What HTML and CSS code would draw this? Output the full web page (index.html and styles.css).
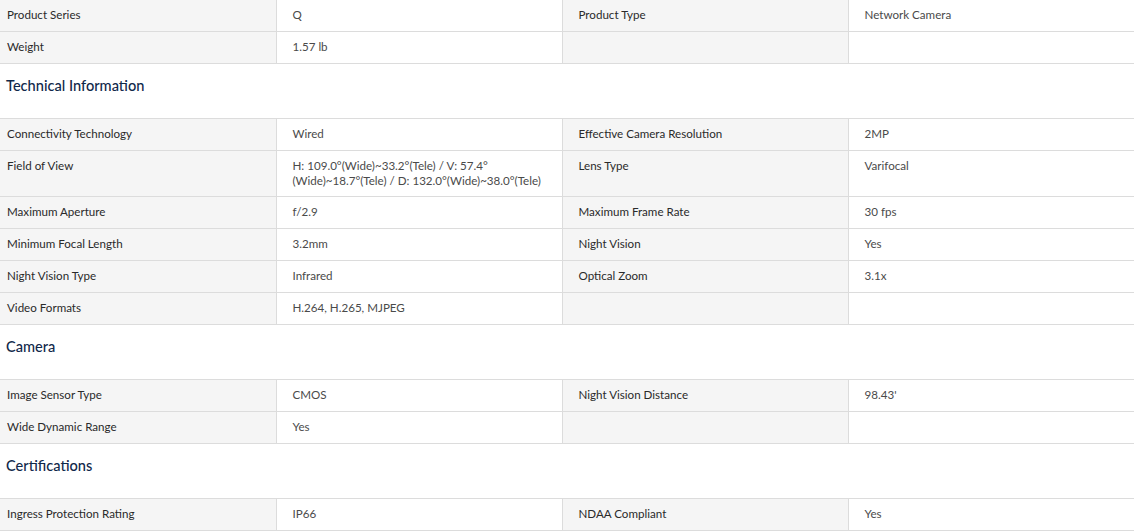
FILE: index.html
```html
<!DOCTYPE html>
<html>
<head>
<meta charset="utf-8">
<link rel="stylesheet" href="styles.css">
</head>
<body>
<table class="spec first">
  <tr><td class="k">Product Series</td><td class="v">Q</td><td class="k">Product Type</td><td class="v">Network Camera</td></tr>
  <tr><td class="k">Weight</td><td class="v">1.57 lb</td><td class="k"></td><td class="v"></td></tr>
</table>
<h3 class="sec">Technical Information</h3>
<table class="spec">
  <tr><td class="k">Connectivity Technology</td><td class="v">Wired</td><td class="k">Effective Camera Resolution</td><td class="v">2MP</td></tr>
  <tr class="multi"><td class="k">Field of View</td><td class="v">H: 109.0°(Wide)~33.2°(Tele) / V: 57.4°<br>(Wide)~18.7°(Tele) / D: 132.0°(Wide)~38.0°(Tele)</td><td class="k">Lens Type</td><td class="v">Varifocal</td></tr>
  <tr><td class="k">Maximum Aperture</td><td class="v">f/2.9</td><td class="k">Maximum Frame Rate</td><td class="v">30 fps</td></tr>
  <tr><td class="k">Minimum Focal Length</td><td class="v">3.2mm</td><td class="k">Night Vision</td><td class="v">Yes</td></tr>
  <tr><td class="k">Night Vision Type</td><td class="v">Infrared</td><td class="k">Optical Zoom</td><td class="v">3.1x</td></tr>
  <tr><td class="k">Video Formats</td><td class="v">H.264, H.265, MJPEG</td><td class="k"></td><td class="v"></td></tr>
</table>
<h3 class="sec">Camera</h3>
<table class="spec">
  <tr><td class="k">Image Sensor Type</td><td class="v">CMOS</td><td class="k">Night Vision Distance</td><td class="v">98.43'</td></tr>
  <tr><td class="k">Wide Dynamic Range</td><td class="v">Yes</td><td class="k"></td><td class="v"></td></tr>
</table>
<h3 class="sec">Certifications</h3>
<table class="spec">
  <tr><td class="k">Ingress Protection Rating</td><td class="v">IP66</td><td class="k">NDAA Compliant</td><td class="v">Yes</td></tr>
</table>
</body>
</html>
```
FILE: styles.css
```css
html, body { margin: 0; padding: 0; background: #fff; }
body { font-family: Lato, "Open Sans", sans-serif; }
.spec {
  width: 1134px;
  border-collapse: collapse;
  table-layout: fixed;
}
.spec td {
  border-top: 1px solid #dcdcdc;
  border-bottom: 1px solid #dcdcdc;
  padding: 7px 16px 9px 16px;
  font-size: 11.6px;
  line-height: 15px;
  height: 15px;
  vertical-align: top;
}
.spec td + td { border-left: 1px solid #dcdcdc; }
.spec td:nth-child(1) { width: 276px; padding-left: 7px; box-sizing: border-box; }
.spec td:nth-child(2) { width: 286px; box-sizing: border-box; }
.spec td:nth-child(3) { width: 286px; box-sizing: border-box; }
.spec.first tr:first-child td { border-top: none; }
.spec .multi td { padding-bottom: 8px; }
.k { background: #f5f5f5; color: #2a2a2a; }
.v { background: #fff; color: #4a4a4a; }
.sec {
  margin: 0;
  padding: 13px 6px 0 6px;
  height: 54px;
  box-sizing: border-box;
  font-size: 14.6px;
  font-weight: 500;
  color: #10284a;
  line-height: 18px;
}
```
